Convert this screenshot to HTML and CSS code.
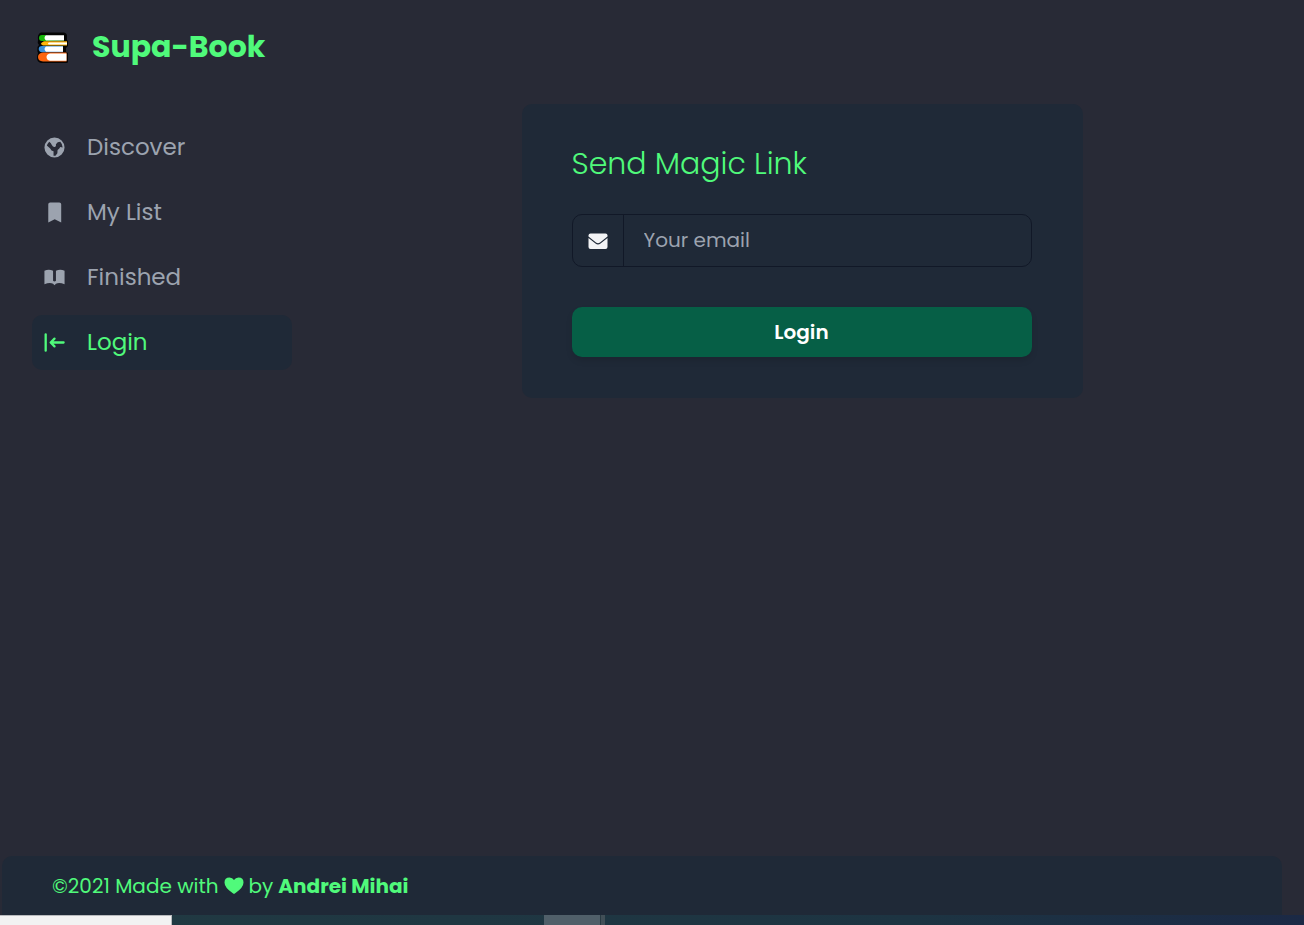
FILE: index.html
```html
<!DOCTYPE html>
<html lang="en">
<head>
  <meta charset="utf-8">
  <meta name="viewport" content="width=device-width, initial-scale=1">
  <title>Supa-Book</title>
  <link rel="stylesheet" href="styles.css">
</head>
<body>
  <div class="page">
    <div class="layout">
      <aside class="sidebar">
        <a class="brand" href="#">
          <svg class="brand-logo" viewBox="0 -1 34 34" aria-hidden="true">
            <path d="M5 1.500H28Q31 2 31 5V9L32 10V15L30 17V21L32 22V31Q32 32 30 32H5Q1 31 1 27Q1 24 2 22Q1 20 1.500 16L3 14Q1 12 2 9Q1 3 5 1.500Z" fill="#050505"/>
            <path d="M10 4H6Q3 4 3 7T6 10H28V9.400L10 9Z" fill="#18b80b"/>
            <path d="M10 4.300H28V9.400H10Q7 7 10 4.300Z" fill="#fff"/>
            <path d="M8 10.200H31V14.400H7Q2.500 12.500 8 10.200Z" fill="#ffb60b"/>
            <path d="M13 11.400H31V13.600H13Q11 12.500 13 11.400Z" fill="#fff"/>
            <path d="M11 15H6Q2.700 15 2.700 18T6 21.200H27V15Z" fill="#3a91dd"/>
            <path d="M10 15.500H27V20.700H10Q7 18 10 15.500Z" fill="#fff"/>
            <path d="M14 21.500H7Q2 22 2 26T7 30.500H30.500V21.500Z" fill="#fb6510"/>
            <path d="M14 22.500H30.500V29.800H14Q10.500 29 10.500 26T14 22.500Z" fill="#fff"/>
          </svg>
          <span>Supa-Book</span>
        </a>
        <nav class="menu" aria-label="Main">
          <a class="menu-item" href="#">
            <svg class="icon" viewBox="0 0 24 24" fill="currentColor" aria-hidden="true">
              <path fill-rule="evenodd" d="M12 1.500a10.500 10.500 0 1 0 0 21 10.500 10.500 0 0 0 0-21ZM6.500 6Q8.500 7.500 9.200 9.500Q10.500 12 12.500 11.500Q14 10.500 13.500 8.500Q15 6 18 6Q20.500 8.500 20.500 12L18 11.500Q17 13.500 15.200 14.500L15 18L13 20.500H11V16Q8.500 15.500 7.500 13L4 10Q4.500 8 6.500 6Z"/>
            </svg>
            <span class="menu-label">Discover</span>
          </a>
          <a class="menu-item" href="#">
            <svg class="icon" viewBox="0 0 24 24" fill="currentColor" aria-hidden="true">
              <path d="M7.500 1.500H17Q19 1.500 19 3.500V22.500L12.200 19L5.500 22.500V3.500Q5.500 1.500 7.500 1.500Z"/>
            </svg>
            <span class="menu-label">My List</span>
          </a>
          <a class="menu-item" href="#">
            <svg class="icon" viewBox="0 0 24 24" fill="currentColor" aria-hidden="true">
              <path d="M1.500 5Q6 3 10.500 5V15.500Q12 17 13.500 15.500V5Q18 3 22.500 5V19Q17 17 13.500 18.500L12 20L10.500 18.500Q7 17 1.500 19Z"/>
            </svg>
            <span class="menu-label">Finished</span>
          </a>
          <a class="menu-item menu-item-active" href="#" aria-current="page">
            <svg class="icon" viewBox="0 0 24 24" fill="none" stroke="currentColor" stroke-width="2.400" stroke-linecap="round" stroke-linejoin="round" aria-hidden="true">
              <path d="M2.800 3.500V20.500M21.500 12H8.500M12 8L8 12L12 16" />
            </svg>
            <span class="menu-label">Login</span>
          </a>
        </nav>
      </aside>
      <main class="content">
        <form class="card">
          <h1 class="card-title">Send Magic Link</h1>
          <div class="field">
            <label class="field-icon" for="email" aria-label="Your email">
              <svg class="mail-icon" viewBox="0 0 20 20" fill="currentColor" aria-hidden="true">
                <path d="M0.500 5.500V4.500Q0.500 2.500 2.500 2.500H17.500Q19.500 2.500 19.500 4.500V5.500L12 11.500Q10 13 8 11.500Z"/>
                <path d="M0.500 7L7.500 12.600Q10 14.500 12.500 12.600L19.500 7V16Q19.500 18 17.500 18H2.500Q0.500 18 0.500 16Z"/>
              </svg>
            </label>
            <input class="field-input" id="email" type="email" placeholder="Your email">
          </div>
          <button class="submit" type="button">Login</button>
        </form>
      </main>
    </div>
    <footer class="footer">
      <span>©2021 Made with</span>
      <svg class="heart" viewBox="0 0 20 18" role="img" aria-label="love">
        <path d="M10 17L8.500 16Q0.500 10.500 0.500 5.500Q0.500 0.500 5.500 0.500Q8.500 0.500 10 3Q11.500 0.500 14.500 0.500Q19.500 0.500 19.500 5.500Q19.500 10.500 11.500 16Z" fill="currentColor"/>
      </svg>
      <span>by</span>
      <a class="author" href="#">Andrei Mihai</a>
    </footer>
  </div>
  <div class="taskbar">
    <div class="taskbar-search"></div>
    <div class="taskbar-apps"></div>
    <div class="taskbar-window"></div>
    <div class="taskbar-edge"></div>
    <div class="taskbar-rest"></div>
  </div>
</body>
</html>
```

FILE: styles.css
```css
* {
  box-sizing: border-box;
}

body {
  margin: 0;
  min-height: 100vh;
  display: flex;
  flex-direction: column;
  background: #282a36;
  color: #50fa7b;
  font-family: Poppins, Inter, "Open Sans", sans-serif;
  font-size: 20px;
  line-height: 30px;
}

a {
  color: inherit;
  text-decoration: none;
}

.page {
  flex: 1;
  display: flex;
  flex-direction: column;
  margin: 0 22px 0 2px;
}

.layout {
  flex: 1;
  display: flex;
}

.sidebar {
  width: 320px;
  flex-shrink: 0;
  padding: 24px 30px;
}

.brand {
  display: flex;
  align-items: center;
  gap: 22px;
  padding-left: 4px;
  font-size: 30px;
  line-height: 46px;
  font-weight: 700;
}

.brand-logo {
  width: 34px;
  height: 34px;
}

.menu {
  display: flex;
  flex-direction: column;
  gap: 10px;
  margin-top: 50px;
}

.menu-item {
  display: flex;
  align-items: center;
  gap: 21px;
  height: 55px;
  padding: 0 11px;
  border-radius: 10px;
  color: #9ca3af;
  font-size: 23px;
}

.menu-item-active {
  background: #1f2937;
  color: #50fa7b;
}

.menu-label {
  padding-bottom: 2px;
}

.icon {
  width: 23px;
  height: 23px;
}

.content {
  flex: 1;
  display: flex;
  justify-content: center;
  align-items: flex-start;
  padding: 104px 20px 40px;
}

.card {
  width: 100%;
  max-width: 561px;
  padding: 40px 51px 41px 50px;
  border-radius: 10px;
  background: #1f2937;
}

.card-title {
  margin: 0 0 30px;
  font-size: 30px;
  line-height: 40px;
  font-weight: 300;
}

.field {
  display: flex;
  height: 53px;
  margin-bottom: 40px;
  border: 1px solid #111827;
  border-radius: 10px;
}

.field-icon {
  display: flex;
  align-items: center;
  justify-content: center;
  width: 51px;
  border-right: 1px solid #111827;
  color: #f3f4f6;
}

.mail-icon {
  width: 20px;
  height: 20px;
}

.field-input {
  flex: 1;
  min-width: 0;
  padding: 0 20px 2px;
  border: 0;
  outline: 0;
  background: transparent;
  color: #f3f4f6;
  font: inherit;
}

.field-input::placeholder {
  color: #9ca3af;
  opacity: 1;
}

.submit {
  display: block;
  width: 100%;
  height: 50px;
  border: 0;
  border-radius: 10px;
  background: #065f46;
  box-shadow: 0 4px 6px rgba(0, 0, 0, 0.1);
  color: #fff;
  font: inherit;
  font-weight: 600;
}

.footer {
  display: flex;
  align-items: center;
  gap: 5px;
  height: 59px;
  padding: 0 50px;
  border-radius: 10px 10px 0 0;
  background: #1f2937;
}

.heart {
  width: 20px;
  height: 18px;
}

.author {
  font-weight: 700;
}

.taskbar {
  display: flex;
  height: 10px;
  background: linear-gradient(90deg, #213a42, #1d3442 70%, #1b2945);
}

.taskbar-search {
  width: 172px;
  border-top: 1px solid #b8babd;
  border-right: 1px solid #b8babd;
  background: #f2f2f2;
}

.taskbar-apps {
  width: 372px;
}

.taskbar-window {
  width: 56px;
  background: #505f69;
}

.taskbar-edge {
  width: 5px;
  border-left: 1px solid #283a42;
  background: #414f57;
}

.taskbar-rest {
  flex: 1;
}
```
